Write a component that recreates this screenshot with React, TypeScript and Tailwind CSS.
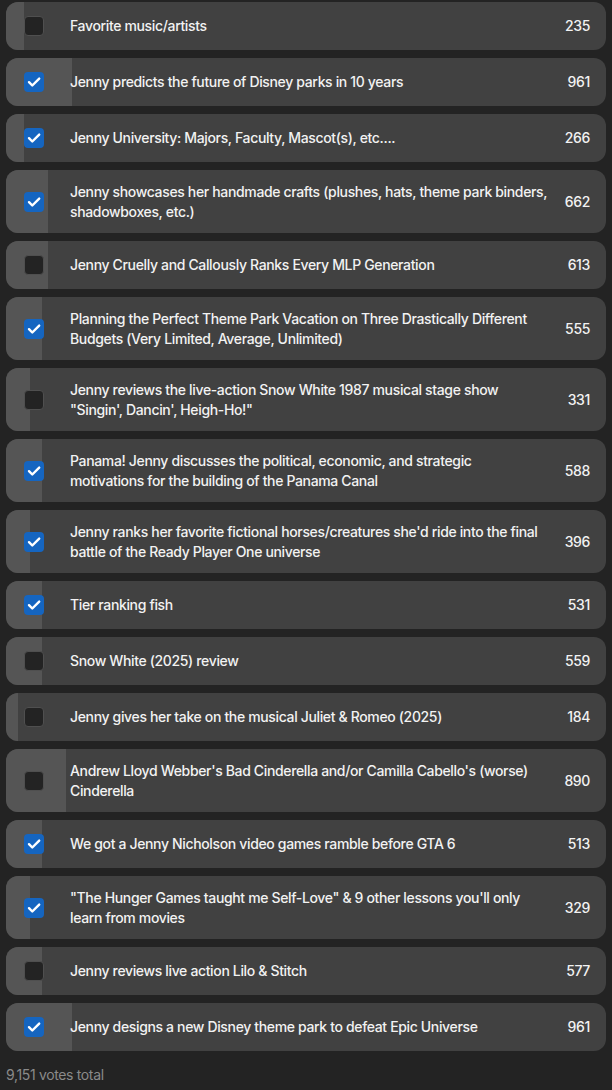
import React, { useState } from 'react';

interface PollOption {
  label: string;
  votes: number;
  checked: boolean;
}

const OPTIONS: PollOption[] = [
  { label: 'Favorite music/artists', votes: 235, checked: false },
  { label: 'Jenny predicts the future of Disney parks in 10 years', votes: 961, checked: true },
  { label: 'Jenny University: Majors, Faculty, Mascot(s), etc....', votes: 266, checked: true },
  { label: 'Jenny showcases her handmade crafts (plushes, hats, theme park binders, shadowboxes, etc.)', votes: 662, checked: true },
  { label: 'Jenny Cruelly and Callously Ranks Every MLP Generation', votes: 613, checked: false },
  { label: 'Planning the Perfect Theme Park Vacation on Three Drastically Different Budgets (Very Limited, Average, Unlimited)', votes: 555, checked: true },
  { label: 'Jenny reviews the live-action Snow White 1987 musical stage show "Singin\', Dancin\', Heigh-Ho!"', votes: 331, checked: false },
  { label: 'Panama! Jenny discusses the political, economic, and strategic motivations for the building of the Panama Canal', votes: 588, checked: true },
  { label: "Jenny ranks her favorite fictional horses/creatures she'd ride into the final battle of the Ready Player One universe", votes: 396, checked: true },
  { label: 'Tier ranking fish', votes: 531, checked: true },
  { label: 'Snow White (2025) review', votes: 559, checked: false },
  { label: 'Jenny gives her take on the musical Juliet & Romeo (2025)', votes: 184, checked: false },
  { label: "Andrew Lloyd Webber's Bad Cinderella and/or Camilla Cabello's (worse) Cinderella", votes: 890, checked: false },
  { label: 'We got a Jenny Nicholson video games ramble before GTA 6', votes: 513, checked: true },
  { label: '"The Hunger Games taught me Self-Love" & 9 other lessons you\'ll only learn from movies', votes: 329, checked: true },
  { label: 'Jenny reviews live action Lilo & Stitch', votes: 577, checked: false },
  { label: 'Jenny designs a new Disney theme park to defeat Epic Universe', votes: 961, checked: true },
];

const TOTAL = OPTIONS.reduce((sum, o) => sum + o.votes, 0);

function CheckMark() {
  return (
    <svg viewBox="0 0 20 20" className="h-5 w-5" fill="none">
      <path d="M5 10.2l3.3 3.3L15.2 6.6" stroke="white" strokeWidth="2.4" strokeLinecap="round" strokeLinejoin="round" />
    </svg>
  );
}

function OptionRow({ option, onToggle }: { option: PollOption; onToggle: () => void }) {
  const pct = Math.round((option.votes / TOTAL) * 100);

  return (
    <div
      onClick={onToggle}
      className="relative flex min-h-12 items-center overflow-hidden rounded-xl bg-[#414141] py-3 pl-[18px] pr-4 cursor-pointer"
    >
      {/* vote share bar */}
      <div className="absolute inset-y-0 left-0 bg-[#555555]" style={{ width: `${pct}%` }} />

      <div
        className={`relative flex h-5 w-5 shrink-0 items-center justify-center rounded-[4px] ${
          option.checked ? 'bg-[#1565c0]' : 'border border-[#4f4f4f] bg-[#232323]'
        }`}
      >
        {option.checked && <CheckMark />}
      </div>
      <span className="relative ml-[26px] flex-1 pr-4 text-[14px] leading-[19.5px] tracking-[-0.025em] font-medium text-[#f2f2f2]">
        {option.label}
      </span>
      <span className="relative text-[14px] leading-5 tracking-[-0.025em] font-medium text-[#f2f2f2]">{option.votes}</span>
    </div>
  );
}

export default function App() {
  const [options, setOptions] = useState(OPTIONS);

  const toggle = (i: number) =>
    setOptions(prev => prev.map((o, idx) => (idx === i ? { ...o, checked: !o.checked } : o)));

  return (
    <div className="min-h-[1090px] bg-[#232323] px-[6px] pt-[2px] font-['Inter','Liberation_Sans',sans-serif]">
      <div className="flex flex-col gap-2">
        {options.map((o, i) => (
          <OptionRow key={i} option={o} onToggle={() => toggle(i)} />
        ))}
      </div>
      <p className="mt-[14px] text-[14px] leading-5 tracking-[-0.025em] text-[#8a8a8a]">
        {TOTAL.toLocaleString('en-US')} votes total
      </p>
    </div>
  );
}
